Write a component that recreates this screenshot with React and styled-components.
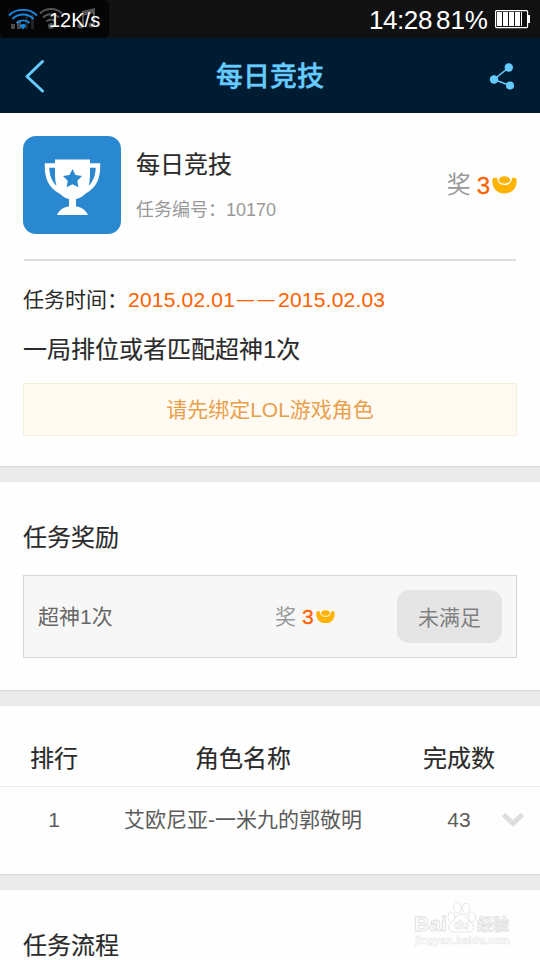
import styled, { createGlobalStyle } from "styled-components"

const GlobalStyle=createGlobalStyle`
    *{
        box-sizing:border-box;
        margin:0;
        padding:0;
    }
    body{
        background-color:#fefefe;
        color:#2a2a2a;
        font-family:"Liberation Sans","Noto Sans CJK SC",sans-serif;
        overflow:hidden;
    }
`

const Page=styled.div`
    position:relative;
    width:540px;
    height:960px;
    overflow:hidden;
    background-color:#fefefe;
`

const StatusBar=styled.div`
    display:flex;
    justify-content:space-between;
    height:38px;
    background-color:#111;
    color:#fff;
`

const NetSpeed=styled.div`
    position:relative;
    width:109px;
    height:38px;
    border-radius:0 6px 6px 6px;
    background-color:#050505;
    svg{
        display:block;
    }
`

const SpeedText=styled.span`
    position:absolute;
    left:49px;
    top:8px;
    font-size:20px;
    line-height:24px;
`

const StatusRight=styled.div`
    display:flex;
    align-items:center;
    padding-right:9px;
    font-size:26px;
    line-height:38px;
    white-space:nowrap;
    svg{
        margin-left:7px;
    }
`

const Clock=styled.span`
    margin-right:4px;
    padding-top:2px;
    letter-spacing:-0.4px;
`

const Percent=styled.span`
    padding-top:2px;
`

const Header=styled.header`
    display:flex;
    align-items:center;
    justify-content:space-between;
    height:75px;
    padding:0 24px;
    background-color:#001c33;
    svg{
        display:block;
    }
`

const Title=styled.h1`
    padding-top:2px;
    font-size:27px;
    font-weight:500;
    line-height:40px;
    color:#66ccff;
    -webkit-text-stroke:0.4px #66ccff;
`

const Section=styled.section`
    height:${(props)=>props.$height}px;
    padding:${(props)=>props.$pad||"0 23px"};
`

const Band=styled.div`
    height:16px;
    border-top:1px solid #d9d9d9;
    background-color:#eaeaea;
`

const TaskHead=styled.div`
    display:flex;
    align-items:center;
    height:98px;
`

const TaskIcon=styled.div`
    width:98px;
    height:98px;
    margin-right:15px;
    border-radius:13px;
    background-color:#2a88d1;
    svg{
        display:block;
    }
`

const TaskInfo=styled.div`
    flex:1;
`

const TaskName=styled.h2`
    font-size:24px;
    font-weight:400;
    line-height:36px;
    -webkit-text-stroke:0.15px #2a2a2a;
`

const TaskId=styled.p`
    margin-top:14px;
    font-size:18px;
    line-height:26px;
    color:#999;
`

const Prize=styled.div`
    display:flex;
    align-items:center;
    font-size:${(props)=>props.$size}px;
    line-height:36px;
    color:#999;
`

const Amount=styled.span`
    margin:0 2px 0 6px;
    padding-top:1px;
    color:#ff6000;
    -webkit-text-stroke:0.3px #ff6000;
`

const Line=styled.div`
    height:2px;
    margin:25px 1px 0;
    background-color:#dcdcdc;
`

const TaskTime=styled.p`
    margin-top:23px;
    font-size:21px;
    line-height:32px;
`

const Dates=styled.span`
    letter-spacing:0.2px;
    color:#ff6000;
`

const Dash=styled.span`
    display:inline-block;
    width:41px;
    margin-left:2px;
    line-height:20px;
    vertical-align:2px;
    font-size:17px;
    letter-spacing:3.5px;
`

const TaskText=styled.p`
    margin-top:16px;
    font-size:24px;
    line-height:36px;
    -webkit-text-stroke:0.15px #2a2a2a;
`

const BindButton=styled.button`
    display:block;
    width:494px;
    height:53px;
    margin-top:15px;
    padding-bottom:3px;
    border:1px solid #f7eedb;
    background-color:#fffaf2;
    color:#e9a04b;
    font-family:inherit;
    font-size:21px;
`

const SectionTitle=styled.h3`
    font-size:24px;
    font-weight:400;
    line-height:36px;
    -webkit-text-stroke:0.15px #2a2a2a;
`

const RewardBox=styled.div`
    display:grid;
    grid-template-columns:237px 1fr 105px;
    align-items:center;
    height:83px;
    margin-top:19px;
    padding:0 14px;
    border:1px solid #d6d6d6;
    background-color:#f7f7f7;
`

const RewardName=styled.span`
    padding-bottom:3px;
    font-size:21px;
    color:#666;
`

const StateButton=styled.button`
    height:53px;
    padding-bottom:2px;
    border:none;
    border-radius:12px;
    background-color:#e5e5e5;
    color:#808080;
    font-family:inherit;
    font-size:21px;
`

const RankRow=styled.div`
    display:grid;
    grid-template-columns:108px 270px 162px;
    align-items:center;
    height:${(props)=>props.$height}px;
    padding-top:${(props)=>props.$head?2:0}px;
    text-align:center;
    font-size:${(props)=>props.$head?24:21}px;
    line-height:36px;
    color:${(props)=>props.$head?"#2a2a2a":"#5c5c5c"};
    border-bottom:${(props)=>props.$head?"1px solid #ebebeb":"none"};
    -webkit-text-stroke:${(props)=>props.$head?"0.15px #2a2a2a":"0"};
`

const Count=styled.div`
    position:relative;
    svg{
        position:absolute;
        right:15px;
        top:50%;
        margin-top:-8px;
    }
`

const Watermark=styled.div`
    position:absolute;
    left:412px;
    top:898px;
`

function SignalIcons() {
    return (
        <svg width="109" height="38" viewBox="0 0 109 38" fill="none">
            <g fill="#4a4a4a">
                <rect x="11" y="24" width="4" height="5"/>
                <rect x="17" y="21" width="4" height="8"/>
                <rect x="25" y="16" width="3" height="13" fill="#222"/>
                <rect x="31" y="12" width="3" height="17" fill="#222"/>
            </g>
            <g stroke="#168be6" strokeWidth="1.900">
                <path d="M9 15.500C16 8 30 8 37 15.500"/>
                <path d="M12.500 19C18 13 28 13 33.500 19"/>
                <path d="M16.500 23C20 19.500 26 19.500 29.500 23"/>
            </g>
            <path d="M20 26q0-2 3-2t3 2l-3 3.500z" fill="#168be6"/>
            <g stroke="#555" strokeWidth="2">
                <path d="M40 13.500C46 7.500 56 7.500 62 13.500"/>
                <path d="M43 17.500C47 13 55 13 59 17.500"/>
                <path d="M46.500 21.500Q51 17.500 55.500 21.500"/>
            </g>
            <circle cx="51" cy="26" r="3" fill="#555"/>
            <path d="M62 26h5l-2.500 3z" fill="#555"/>
            <g fill="#555">
                <path d="M82 11l13-3v5l-13 3z"/>
                <path d="M82 12h2v14h-2zM93 10h2v15h-2z"/>
                <ellipse cx="80.500" cy="26" rx="3" ry="2.500"/>
                <ellipse cx="91.500" cy="25" rx="3" ry="2.500"/>
            </g>
        </svg>
    )
}

function Battery() {
    return (
        <svg width="36" height="20" viewBox="0 0 36 20">
            <rect x=".6" y="1.600" width="32" height="17" rx="1" fill="none" stroke="#fff" strokeWidth="1.200"/>
            <g fill="#fff">
                <rect x="2" y="3" width="5" height="14"/>
                <rect x="8" y="3" width="5" height="14"/>
                <rect x="14" y="3" width="5" height="14"/>
                <rect x="20" y="3" width="5" height="14"/>
                <rect x="26" y="3" width="1" height="14"/>
                <rect x="33" y="6" width="2" height="8"/>
            </g>
        </svg>
    )
}

function Trophy() {
    return (
        <svg width="98" height="98" viewBox="0 0 98 98">
            <path d="M34 29.500H24Q23.500 51 42 57.500M65 29.500H75Q75.500 51 57 57.500" fill="none" stroke="#fff" strokeWidth="4.500"/>
            <path d="M32 23.500H67V34Q68 61 53 63V70.500C58 71 63 74 65 79H34C36 74 41 71 46 70.500V63Q31 60 32 34Z" fill="#fff"/>
            <path d="M49.500 33l3 6 6.500 1-4.700 4.700 1.100 6.600-5.900-3.100-5.900 3.100 1.100-6.600L40 40l6.500-1z" fill="#2a88d1"/>
        </svg>
    )
}

function Ingot({width}) {
    return (
        <svg width={width} height={width*0.72} viewBox="0 0 25 18">
            <path d="M.4 3.500C.8 1.800 3 1.200 5.500 2.200H19.500C22 1.200 24.200 1.800 24.600 3.500 25.300 12 20 17.500 12.500 17.500S-.3 12 .4 3.500Z" fill="#ffb300"/>
            <path d="M5 0H20Q20.500 9 12.500 9T5 0Z" fill="#fff"/>
            <ellipse cx="12.500" cy="4" rx="5.800" ry="3.700" fill="#ffb300"/>
        </svg>
    )
}

function Logo() {
    return (
        <svg width="110" height="54" viewBox="0 0 110 54" fill="#fff" stroke="#dedede">
            <g fontFamily='"Liberation Sans","Noto Sans CJK SC",sans-serif' fontWeight="700" strokeWidth=".8">
                <text x="2" y="33" fontSize="20" textLength="33" lengthAdjust="spacingAndGlyphs">Bai</text>
                <ellipse cx="39.500" cy="19" rx="3.500" ry="5"/>
                <ellipse cx="45.500" cy="9.500" rx="3.700" ry="5.300"/>
                <ellipse cx="54" cy="10.500" rx="3.700" ry="5.300"/>
                <ellipse cx="60" cy="19" rx="3.500" ry="5"/>
                <path d="M49.500 16Q53 17 57 23C64 27 63 34 56 34H43C35 34 35 27 41 23Q45 16 49.500 16Z"/>
                <text x="42" y="31" fontSize="13" textLength="15" lengthAdjust="spacingAndGlyphs" strokeWidth=".6">du</text>
                <text x="65" y="32" fontSize="16" textLength="32">经验</text>
                <text x="3" y="46" fontSize="10" textLength="95" lengthAdjust="spacingAndGlyphs" stroke="#e7e7e7" strokeWidth=".5">jingyan.baidu.com</text>
            </g>
        </svg>
    )
}

function App() {
    return (
        <Page>
            <GlobalStyle/>
            <StatusBar>
                <NetSpeed>
                    <SignalIcons/>
                    <SpeedText>12K/s</SpeedText>
                </NetSpeed>
                <StatusRight>
                    <Clock>14:28</Clock>
                    <Percent>81%</Percent>
                    <Battery/>
                </StatusRight>
            </StatusBar>
            <Header>
                <svg width="28" height="34" viewBox="0 0 28 34" fill="none" stroke="#66ccff" strokeWidth="3" strokeLinecap="round" strokeLinejoin="round">
                    <path d="M18.500 2.500L3 17.500 18.500 32"/>
                </svg>
                <Title>每日竞技</Title>
                <svg width="28" height="28" viewBox="0 0 28 28" fill="#66ccff">
                    <path d="M20.800 5.500L6 17.500 22 23.500" fill="none" stroke="#66ccff" strokeWidth="1.600"/>
                    <circle cx="20.800" cy="5.500" r="4.200"/>
                    <circle cx="6" cy="17.500" r="4.200"/>
                    <circle cx="22" cy="23.500" r="4"/>
                </svg>
            </Header>
            <Section $height={353} $pad="23px 23px 0">
                <TaskHead>
                    <TaskIcon><Trophy/></TaskIcon>
                    <TaskInfo>
                        <TaskName>每日竞技</TaskName>
                        <TaskId>任务编号：10170</TaskId>
                    </TaskInfo>
                    <Prize $size={24}>奖<Amount>3</Amount><Ingot width={25}/></Prize>
                </TaskHead>
                <Line/>
                <TaskTime>任务时间：<Dates>2015.02.01<Dash>——</Dash>2015.02.03</Dates></TaskTime>
                <TaskText>一局排位或者匹配超神1次</TaskText>
                <BindButton>请先绑定LOL游戏角色</BindButton>
            </Section>
            <Band/>
            <Section $height={208} $pad="38px 23px 0">
                <SectionTitle>任务奖励</SectionTitle>
                <RewardBox>
                    <RewardName>超神1次</RewardName>
                    <Prize $size={21}>奖<Amount>3</Amount><Ingot width={19}/></Prize>
                    <StateButton>未满足</StateButton>
                </RewardBox>
            </Section>
            <Band/>
            <Section $height={168} $pad="24px 0 0">
                <RankRow $head $height={57}>
                    <span>排行</span>
                    <span>角色名称</span>
                    <Count>完成数</Count>
                </RankRow>
                <RankRow $height={66}>
                    <span>1</span>
                    <span>艾欧尼亚-一米九的郭敬明</span>
                    <Count>
                        43
                        <svg width="24" height="16" viewBox="0 0 24 16" fill="none" stroke="#dedede" strokeWidth="5">
                            <path d="M2.500 2.500L12 11.500 21.500 2.500"/>
                        </svg>
                    </Count>
                </RankRow>
            </Section>
            <Band/>
            <Section $height={70} $pad="38px 23px 0">
                <SectionTitle>任务流程</SectionTitle>
            </Section>
            <Watermark><Logo/></Watermark>
        </Page>
    )
}

export default App
